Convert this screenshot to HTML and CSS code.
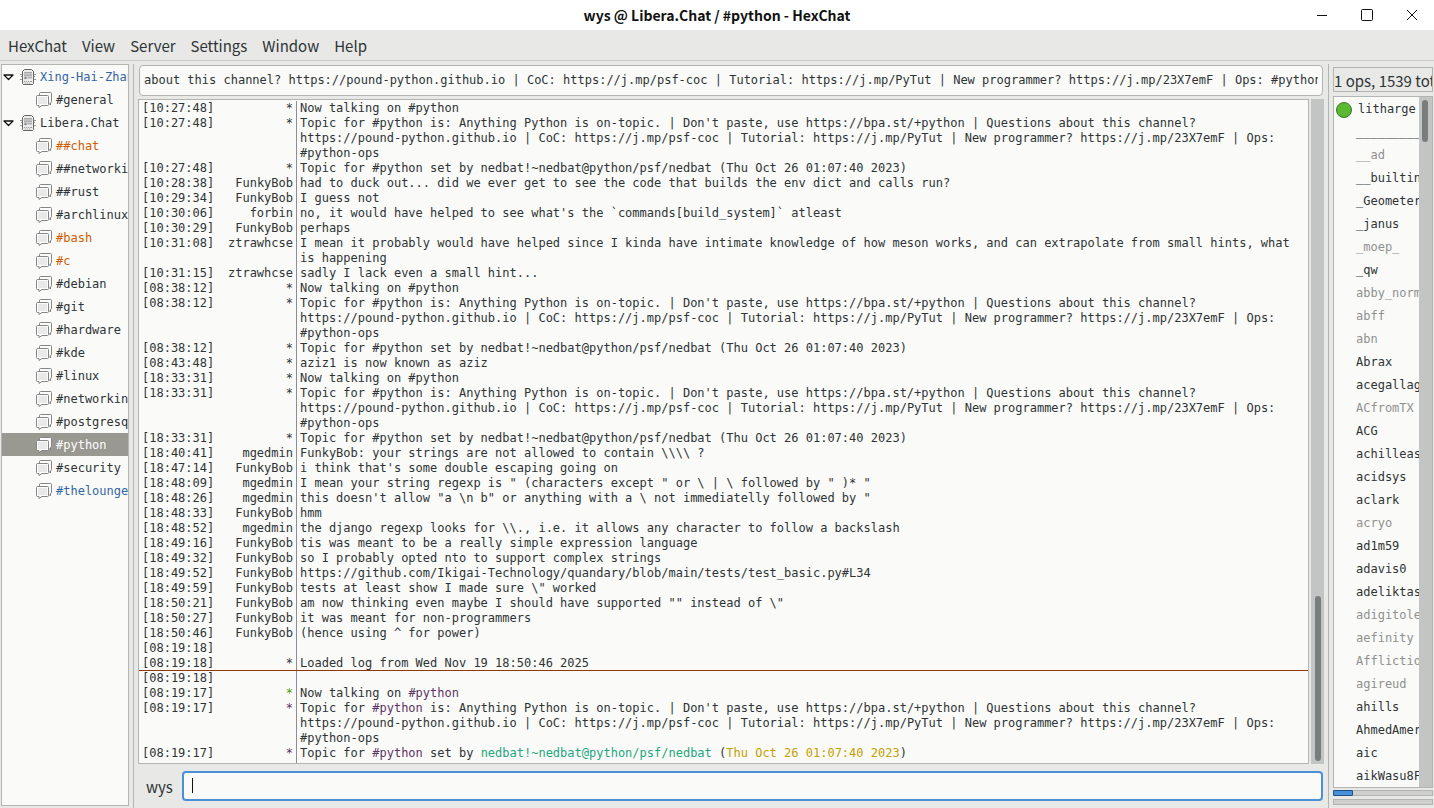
FILE: index.html
```html
<!DOCTYPE html>
<html lang="en">
<head>
  <meta charset="UTF-8" />
  <meta name="viewport" content="width=device-width, initial-scale=1.0"/>
  <title>wys @ Libera.Chat / #python - HexChat</title>
  <link rel="stylesheet" href="styles.css">
</head>
<body>
  <svg class="defs" aria-hidden="true">
    <symbol id="icon-arrow" viewBox="0 0 11 7">
      <path d="M1 1h9L5.500 5.500z" fill="#fff" stroke="#111" stroke-width="1.300" stroke-linejoin="round"/>
    </symbol>
    <symbol id="icon-server" viewBox="0 0 16 16">
      <path d="M0 5.500h2M1 7.500h1M0 10.500h2M14 5.500h2M14 7.500h1M14 10.500h2" stroke="#999"/>
      <path d="M4.500 .5h7l2 2v12l-1 1h-9l-1-1v-12z" fill="#ececec" stroke="#666"/>
      <rect x="4" y="3" width="8" height="3" fill="#c2c2c2"/>
      <rect x="4" y="7" width="8" height="3" fill="#d4d4d4"/>
      <path d="M4 6.500h8M4 3.500h8M8 8.500h4" stroke="#aaa"/>
      <circle cx="5.500" cy="9" r="1.200" fill="#888"/>
      <path d="M4 12.500h1M6 12.500h1M8 12.500h1M10 12.500h2M5 14h1M7 14h1M9 14h1" stroke="#999"/>
    </symbol>
    <symbol id="icon-channel" viewBox="0 0 16 16">
      <path class="bubble" d="M3.500 4V1.500q0-1 1-1h10q1 0 1 1v8q0 1-1 1v2.500l-2-2"/>
      <path class="bubble" d="M1.500 3.500h10q1 0 1 1v8q0 1-1 1H6l-3 2v-2H1.500q-1 0-1-1v-8q0-1 1-1z"/>
      <rect x="2" y="5" width="9" height="7" fill="#e9e9e9"/>
    </symbol>
  </svg>

  <div class="window">
    <header class="titlebar">
      <h1>wys @ Libera.Chat / #python - HexChat</h1>
      <div class="controls">
        <button type="button" aria-label="Minimize"><svg viewBox="0 0 12 12"><path d="M1 6.500h10"/></svg></button>
        <button type="button" aria-label="Maximize"><svg viewBox="0 0 12 12"><rect x=".5" y=".5" width="11" height="11" rx="1"/></svg></button>
        <button type="button" aria-label="Close"><svg viewBox="0 0 12 12"><path d="M1 1l10 10M11 1L1 11"/></svg></button>
      </div>
    </header>

    <nav class="menubar">
      <button type="button">HexChat</button>
      <button type="button">View</button>
      <button type="button">Server</button>
      <button type="button">Settings</button>
      <button type="button">Window</button>
      <button type="button">Help</button>
    </nav>

    <main class="panes">
      <aside class="tree">
        <ul id="channels"></ul>
      </aside>

      <section class="chat">
        <input class="topic" type="text" aria-label="Topic" value="about this channel? https://pound-python.github.io | CoC: https://j.mp/psf-coc | Tutorial: https://j.mp/PyTut | New programmer? https://j.mp/23X7emF | Ops: #python-ops">
        <div class="log-row">
          <div class="log" id="log"></div>
          <div class="scrollbar log-scroll"><div class="thumb"></div></div>
        </div>
        <form class="entry">
          <label for="message">wys</label>
          <div class="message-box">
            <input type="text" id="message" autocomplete="off">
            <span class="caret"></span>
          </div>
        </form>
      </section>

      <aside class="people">
        <div class="count">1 ops, 1539 total</div>
        <div class="users-row">
          <ul id="users"></ul>
          <div class="scrollbar users-scroll"><div class="thumb"></div></div>
        </div>
        <div class="meter"><div class="level"></div></div>
        <div class="meter"></div>
      </aside>
    </main>
  </div>

  <script src="script.js"></script>
</body>
</html>
```

FILE: styles.css
```css
* {
  box-sizing: border-box;
}

body {
  margin: 0;
  background: #e8e8e6;
  color: #2e3436;
  font: 15px/22px "Noto Sans CJK SC", sans-serif;
}

ul {
  list-style: none;
  margin: 0;
  padding: 0;
}

button {
  border: none;
  background: none;
  padding: 0;
  font: inherit;
  color: inherit;
}

.defs {
  position: absolute;
  width: 0;
  height: 0;
}

.window {
  display: flex;
  flex-direction: column;
  height: 100vh;
}

/* title bar */
.titlebar {
  display: grid;
  grid-template-columns: 1fr auto 1fr;
  align-items: center;
  height: 30px;
  flex: none;
  background: #fff;
  color: #111;
}

.titlebar h1 {
  grid-column: 2;
  margin: 0;
  font-size: 14px;
  font-weight: bold;
}

.controls {
  display: flex;
  justify-content: flex-end;
  gap: 33px;
  padding-right: 16px;
}

.controls button {
  display: flex;
}

.controls svg {
  width: 12px;
  height: 12px;
  fill: none;
  stroke: #111;
}

.menubar {
  display: flex;
  flex: none;
  gap: 15px;
  height: 31px;
  padding: 2px 8px 0;
  border-bottom: 1px solid #cbccca;
}

/* panes */
.panes {
  display: grid;
  grid-template-columns: 133px 1fr 106px;
  grid-template-rows: minmax(0, 1fr);
  flex: 1;
  min-height: 0;
  padding-top: 3px;
  font: 12px/15px "DejaVu Sans Mono", monospace;
}

.tree {
  margin: 0 4px 2px 1px;
  border: 1px solid #b3b5b2;
  background: #fafaf8;
  overflow: hidden;
}

.tree li {
  display: flex;
  align-items: center;
  gap: 4px;
  height: 23px;
  padding: 1px 0 0 34px;
  white-space: nowrap;
}

.tree li.network {
  padding-left: 1px;
}

.tree svg {
  flex: none;
  width: 16px;
  height: 16px;
}

.tree .arrow {
  width: 11px;
  height: 7px;
  margin-right: 2px;
}

.bubble {
  fill: #fcfcfc;
  stroke: #858585;
}

.tree .message {
  color: #ce5c00;
}

.tree .data {
  color: #3465a4;
}

.tree .selected {
  background: #9a9991;
  color: #fff;
}

.tree .selected .bubble {
  stroke: #fff;
}

.chat {
  display: flex;
  flex-direction: column;
  min-width: 0;
  border-left: 1px solid #b3b5b2;
  padding: 1px 4px 7px;
}

.topic {
  height: 31px;
  flex: none;
  margin: 0 1px 3px;
  padding: 0 4px 2px;
  border: 1px solid #b3b5b2;
  border-radius: 4px;
  background: #fafaf8;
  color: inherit;
  font: inherit;
}

.log-row {
  display: flex;
  flex: 1;
  gap: 2px;
  min-height: 0;
}

.log {
  flex: 1;
  display: flex;
  flex-direction: column;
  min-width: 0;
  border: 1px solid #b3b5b2;
  background: #fafaf8;
  overflow: hidden;
}

.line {
  display: grid;
  grid-template-columns: 73px 82px 1fr;
  flex: none;
  padding-left: 3px;
}

.line:first-child {
  padding-top: 1px;
}

.line:last-child {
  flex: 1;
}

.line .nick {
  padding-right: 3px;
  border-right: 1px solid #8c8c9a;
  text-align: right;
}

.line .text {
  padding-left: 3px;
  min-height: 15px;
}

.url {
  white-space: nowrap;
}

/* last-read line */
.marker {
  margin-top: -1px;
  border-top: 1px solid #8f3902;
}

.joined {
  color: #4e9a06;
}

.notice,
.channel {
  color: #5c3566;
}

.host {
  color: #1fa67e;
}

.date {
  color: #c4a000;
}

.scrollbar {
  flex: none;
  width: 13px;
  padding: 3px;
  background: #c3c5c4;
}

.thumb {
  width: 6px;
  border-radius: 3px;
  background: #797d7e;
}

.log-scroll {
  display: flex;
  align-items: flex-end;
  padding-left: 4px;
}

.log-scroll .thumb {
  height: 25%;
}

.entry {
  display: flex;
  align-items: center;
  flex: none;
  gap: 9px;
  margin: 7px 1px 0 8px;
  font: 15px/22px "Noto Sans CJK SC", sans-serif;
}

.entry label {
  padding-top: 2px;
}

.message-box {
  position: relative;
  flex: 1;
}

.message-box input {
  display: block;
  width: 100%;
  height: 30px;
  padding: 0 8px;
  border: 2px solid #4a90d9;
  border-radius: 4px;
  background: #fafaf8;
  font: 12px/15px "DejaVu Sans Mono", monospace;
  outline: none;
}

.caret {
  position: absolute;
  left: 10px;
  top: 7px;
  width: 1px;
  height: 15px;
  background: #111;
}

.people {
  display: flex;
  flex-direction: column;
  min-width: 0;
  border-left: 1px solid #b3b5b2;
  padding: 3px 1px 3px 4px;
}

.count {
  flex: none;
  height: 25px;
  margin-bottom: 4px;
  border: 1px solid #b3b5b2;
  font: 15px/26px "Noto Sans CJK SC", sans-serif;
  white-space: nowrap;
  overflow: hidden;
}

.users-row {
  display: flex;
  flex: 1;
  min-height: 0;
  margin-bottom: 2px;
  border: 1px solid #b3b5b2;
  background: #fafaf8;
}

.users-row ul {
  flex: 1;
  padding-top: 1px;
  overflow: hidden;
}

.users-row li {
  height: 23px;
  padding-left: 22px;
  line-height: 23px;
  white-space: nowrap;
}

.users-row .op {
  display: flex;
  align-items: center;
  gap: 6px;
  padding-left: 2px;
}

.users-row .op::before {
  content: "";
  flex: none;
  width: 14px;
  height: 14px;
  border: 1px solid #3c7a1c;
  border-radius: 50%;
  background: #5bb832;
}

.users-row .away {
  color: #8f9190;
}

.users-scroll .thumb {
  height: 42px;
}

.meter {
  flex: none;
  height: 6px;
  border: 1px solid #b3b5b2;
  background: #cfcfcd;
}

.meter + .meter {
  margin-top: 3px;
}

.level {
  width: 20px;
  height: 6px;
  margin: -1px;
  border: 1px solid #1c5187;
  border-radius: 1px;
  background: #4a90d9;
}
```

FILE: script.js
```javascript
const channels = [
  ['Xing-Hai-Zhan', 'network data'],
  ['#general', ''],
  ['Libera.Chat', 'network'],
  ['##chat', 'message'],
  ['##networking', ''],
  ['##rust', ''],
  ['#archlinux', ''],
  ['#bash', 'message'],
  ['#c', 'message'],
  ['#debian', ''],
  ['#git', ''],
  ['#hardware', ''],
  ['#kde', ''],
  ['#linux', ''],
  ['#networking', ''],
  ['#postgresql', ''],
  ['#python', 'selected'],
  ['#security', ''],
  ['#thelounge', 'data']
];

// names that start with "-" are away
const users = [
  '__________', '-__ad', '__builtin', '_Geometer', '_janus', '-_moep_', '_qw',
  '-abby_norm', '-abff', '-abn', 'Abrax', 'acegallag', '-ACfromTX', 'ACG',
  'achilleas', 'acidsys', 'aclark', '-acryo', 'ad1m59', 'adavis0', 'adeliktas',
  '-adigitole', '-aefinity', '-Afflictio', '-agireud', 'ahills', 'AhmedAmer',
  'aic', 'aikWasu8F'
];

const talking = 'Now talking on #python';
const topic = `Topic for #python is: Anything Python is on-topic. | Don't paste, use https://bpa.st/+python | Questions about this channel? <span class="url">https://pound-python.github.io</span> | CoC: https://j.mp/psf-coc | Tutorial: https://j.mp/PyTut | New programmer? https://j.mp/23X7emF | Ops: <span class="url">#python-ops</span>`;
const setBy = 'Topic for #python set by nedbat!~nedbat@python/psf/nedbat (Thu Oct 26 01:07:40 2023)';
const chan = '<span class="channel">#python</span>';

const lines = [
  ['10:27:48', '*', talking],
  ['10:27:48', '*', topic],
  ['10:27:48', '*', setBy],
  ['10:28:38', 'FunkyBob', 'had to duck out... did we ever get to see the code that builds the env dict and calls run?'],
  ['10:29:34', 'FunkyBob', 'I guess not'],
  ['10:30:06', 'forbin', "no, it would have helped to see what's the `commands[build_system]` atleast"],
  ['10:30:29', 'FunkyBob', 'perhaps'],
  ['10:31:08', 'ztrawhcse', 'I mean it probably would have helped since I kinda have intimate knowledge of how meson works, and can extrapolate from small hints, what is happening'],
  ['10:31:15', 'ztrawhcse', 'sadly I lack even a small hint...'],
  ['08:38:12', '*', talking],
  ['08:38:12', '*', topic],
  ['08:38:12', '*', setBy],
  ['08:43:48', '*', 'aziz1 is now known as aziz'],
  ['18:33:31', '*', talking],
  ['18:33:31', '*', topic],
  ['18:33:31', '*', setBy],
  ['18:40:41', 'mgedmin', 'FunkyBob: your strings are not allowed to contain \\\\\\\\ ?'],
  ['18:47:14', 'FunkyBob', "i think that's some double escaping going on"],
  ['18:48:09', 'mgedmin', 'I mean your string regexp is " (characters except " or \\ | \\ followed by " )* "'],
  ['18:48:26', 'mgedmin', 'this doesn\'t allow "a \\n b" or anything with a \\ not immediatelly followed by "'],
  ['18:48:33', 'FunkyBob', 'hmm'],
  ['18:48:52', 'mgedmin', 'the django regexp looks for \\\\., i.e. it allows any character to follow a backslash'],
  ['18:49:16', 'FunkyBob', 'tis was meant to be a really simple expression language'],
  ['18:49:32', 'FunkyBob', 'so I probably opted nto to support complex strings'],
  ['18:49:52', 'FunkyBob', 'https://github.com/Ikigai-Technology/quandary/blob/main/tests/test_basic.py#L34'],
  ['18:49:59', 'FunkyBob', 'tests at least show I made sure \\" worked'],
  ['18:50:21', 'FunkyBob', 'am now thinking even maybe I should have supported "" instead of \\"'],
  ['18:50:27', 'FunkyBob', 'it was meant for non-programmers'],
  ['18:50:46', 'FunkyBob', '(hence using ^ for power)'],
  ['08:19:18', '', ''],
  ['08:19:18', '*', 'Loaded log from Wed Nov 19 18:50:46 2025'],
  ['08:19:18', '', '', 'marker'],
  ['08:19:17', '<span class="joined">*</span>', talking.replace('#python', chan)],
  ['08:19:17', '<span class="notice">*</span>', topic.replace('#python', chan)],
  ['08:19:17', '<span class="notice">*</span>', `Topic for ${chan} set by <span class="host">nedbat!~nedbat@python/psf/nedbat</span> (<span class="date">Thu Oct 26 01:07:40 2023</span>)`]
];

document.getElementById('channels').innerHTML = channels.map(([name, state]) => {
  const network = state.includes('network');
  const arrow = network ? '<svg class="arrow"><use href="#icon-arrow"/></svg>' : '';
  return `<li class="${state}">${arrow}<svg><use href="#icon-${network ? 'server' : 'channel'}"/></svg>${name}</li>`;
}).join('');

document.getElementById('users').innerHTML = '<li class="op">litharge</li>' + users.map(name =>
  name[0] === '-' ? `<li class="away">${name.slice(1)}</li>` : `<li>${name}</li>`
).join('');

document.getElementById('log').innerHTML = lines.map(([time, nick, text, extra]) => `
  <div class="line ${extra || ''}">
    <span class="time">[${time}]</span>
    <span class="nick">${nick}</span>
    <span class="text">${text}</span>
  </div>
`).join('');
```
